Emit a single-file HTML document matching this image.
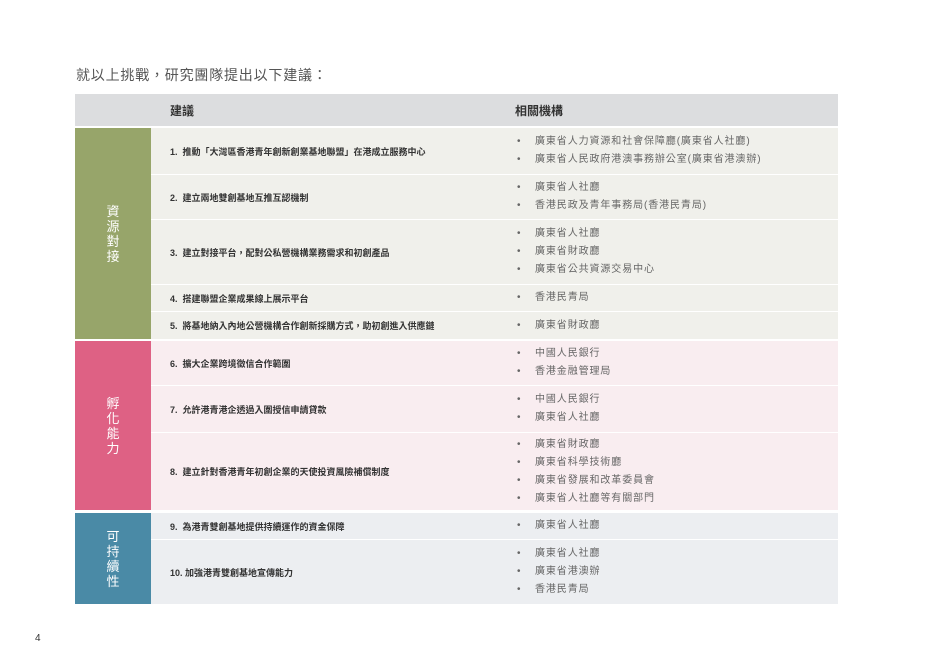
<!DOCTYPE html>
<html><head><meta charset="utf-8"><style>
*{margin:0;padding:0;box-sizing:border-box}
body{width:944px;height:664px;background:#fff;position:relative;font-family:"Liberation Sans","Noto Sans CJK TC",sans-serif;overflow:hidden}
.a{position:absolute}
.title{left:76px;top:65px;font-size:14px;color:#555;letter-spacing:0.8px}
.hdr{left:75px;top:94px;width:763px;height:32px;background:#dcdddf}
.hdr span{position:absolute;top:8px;font-size:12px;font-weight:bold;color:#333}
.cat{left:75px;width:76px;color:#fff;font-size:13px;font-weight:normal;display:flex;align-items:center;justify-content:center;text-align:center;line-height:15px}
.row{left:151px;width:687px;display:flex;align-items:center}
.s{position:absolute;left:19px;font-size:9px;font-weight:bold;color:#333}
.ag{position:absolute;left:366px;font-size:10px;color:#666;line-height:18px;letter-spacing:0.9px}
.ag div:before{content:"•";position:absolute;left:0;color:#666}
.ag div{padding-left:18px;position:relative}
.g{background:#f0f0eb}.p{background:#f9edf0}.b{background:#eceef1}
</style></head><body>
<div class="a title">就以上挑戰，研究團隊提出以下建議：</div>
<div class="a hdr"><span style="left:95px">建議</span><span style="left:440px">相關機構</span></div>

<div class="a cat" style="top:128px;height:211px;background:#97a56a">資<br>源<br>對<br>接</div>
<div class="a cat" style="top:341px;height:169px;background:#de6184">孵<br>化<br>能<br>力</div>
<div class="a cat" style="top:513px;height:91px;background:#4a8aa6">可<br>持<br>續<br>性</div>

<div class="a row g" style="top:128px;height:46px"><span class="s">1.&nbsp; 推動「大灣區香港青年創新創業基地聯盟」在港成立服務中心</span><div class="ag"><div>廣東省人力資源和社會保障廳(廣東省人社廳)</div><div>廣東省人民政府港澳事務辦公室(廣東省港澳辦)</div></div></div>
<div class="a row g" style="top:175px;height:44px"><span class="s">2.&nbsp; 建立兩地雙創基地互推互認機制</span><div class="ag"><div>廣東省人社廳</div><div>香港民政及青年事務局(香港民青局)</div></div></div>
<div class="a row g" style="top:220px;height:64px"><span class="s">3.&nbsp; 建立對接平台，配對公私營機構業務需求和初創產品</span><div class="ag"><div>廣東省人社廳</div><div>廣東省財政廳</div><div>廣東省公共資源交易中心</div></div></div>
<div class="a row g" style="top:285px;height:26px"><span class="s">4.&nbsp; 搭建聯盟企業成果線上展示平台</span><div class="ag"><div>香港民青局</div></div></div>
<div class="a row g" style="top:312px;height:27px"><span class="s">5.&nbsp; 將基地納入內地公營機構合作創新採購方式，助初創進入供應鏈</span><div class="ag"><div>廣東省財政廳</div></div></div>

<div class="a row p" style="top:341px;height:44px"><span class="s">6.&nbsp; 擴大企業跨境徵信合作範圍</span><div class="ag"><div>中國人民銀行</div><div>香港金融管理局</div></div></div>
<div class="a row p" style="top:386px;height:46px"><span class="s">7.&nbsp; 允許港青港企透過入圍授信申請貸款</span><div class="ag"><div>中國人民銀行</div><div>廣東省人社廳</div></div></div>
<div class="a row p" style="top:433px;height:77px"><span class="s">8.&nbsp; 建立針對香港青年初創企業的天使投資風險補償制度</span><div class="ag"><div>廣東省財政廳</div><div>廣東省科學技術廳</div><div>廣東省發展和改革委員會</div><div>廣東省人社廳等有關部門</div></div></div>

<div class="a row b" style="top:513px;height:26px"><span class="s">9.&nbsp; 為港青雙創基地提供持續運作的資金保障</span><div class="ag"><div>廣東省人社廳</div></div></div>
<div class="a row b" style="top:540px;height:64px"><span class="s">10. 加強港青雙創基地宣傳能力</span><div class="ag"><div>廣東省人社廳</div><div>廣東省港澳辦</div><div>香港民青局</div></div></div>

<div class="a" style="left:35px;top:633px;font-size:10px;color:#333">4</div>
</body></html>
